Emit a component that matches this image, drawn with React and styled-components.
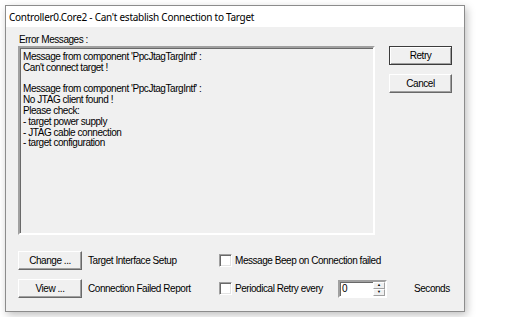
import React from 'react';
import styled, { createGlobalStyle } from 'styled-components';

const GlobalStyle = createGlobalStyle`
  html, body {
    margin: 0;
    padding: 0;
    background: #ffffff;
  }
  body {
    padding: 5px;
    font-family: 'Liberation Sans', Arial, sans-serif;
    font-size: 10px;
    letter-spacing: -0.45px;
    color: #000;
  }
`;

const Window = styled.div`
  width: 458px;
  height: 305px;
  border: 1px solid #8c8c8c;
  background: #f0f0f0;
  box-shadow: 2px 3px 8px rgba(0, 0, 0, 0.25);
  display: flex;
  flex-direction: column;
`;

const TitleBar = styled.div`
  height: 21px;
  background: #ffffff;
  display: flex;
  align-items: center;
  padding-left: 3px;
  font-family: 'Noto Sans', 'Open Sans', sans-serif;
  font-size: 10px;
  letter-spacing: -0.27px;
  color: #000;
  white-space: nowrap;
`;

const Body = styled.div`
  flex: 1;
  padding: 6px 13px 0 12px;
  display: flex;
  flex-direction: column;
`;

const TopRow = styled.div`
  display: flex;
  gap: 14px;
`;

const MessagePane = styled.div`
  display: flex;
  flex-direction: column;
`;

const Caption = styled.div`
  height: 13px;
  line-height: 13px;
  padding-left: 1px;
`;

const MessageBox = styled.div`
  width: 350px;
  height: 181px;
  border-style: solid;
  border-width: 2px;
  border-color: #a0a0a0 #ffffff #ffffff #a0a0a0;
  box-shadow: inset 1px 1px 0 #696969;
  padding: 4px 0 0 3px;
  line-height: 10.8px;
  white-space: pre;
  overflow: hidden;
`;

const ButtonColumn = styled.div`
  display: flex;
  flex-direction: column;
  gap: 9px;
  padding-top: 13px;
`;

const Button = styled.button`
  width: ${({ w }) => w || 63}px;
  height: 19px;
  padding: 0;
  background: #f0f0f0;
  font-family: inherit;
  font-size: 10px;
  letter-spacing: inherit;
  color: #000;
  border: 1px solid;
  border-color: ${({ primary }) => (primary ? '#3c3c3c' : '#ffffff #696969 #696969 #ffffff')};
  box-shadow: ${({ primary }) =>
    primary
      ? 'inset 1px 1px 0 #ffffff, inset -1px -1px 0 #a0a0a0'
      : 'inset -1px -1px 0 #a0a0a0'};
`;

const Options = styled.div`
  display: grid;
  grid-template-columns: 64px 137px 119px 49px auto;
  grid-auto-rows: 19px;
  row-gap: 9px;
  margin-top: 16px;
  align-items: center;
`;

const OptionLabel = styled.span`
  padding-left: 6px;
  white-space: nowrap;
`;

const CheckField = styled.label`
  display: flex;
  align-items: center;
  gap: 3px;
  white-space: nowrap;
  grid-column: ${({ span }) => span || 'auto'};
`;

const CheckBox = styled.span`
  width: 11px;
  height: 11px;
  background: #ffffff;
  border: 1px solid;
  border-color: #a0a0a0 #ffffff #ffffff #a0a0a0;
  box-shadow: inset 1px 1px 0 #696969, inset -1px -1px 0 #e3e3e3;
`;

const Spin = styled.div`
  width: 45px;
  height: 14px;
  display: flex;
  background: #ffffff;
  border: 2px solid;
  border-color: #a0a0a0 #ffffff #ffffff #a0a0a0;
  box-shadow: inset 1px 1px 0 #696969;
`;

const SpinValue = styled.span`
  flex: 1;
  padding: 0 0 0 2px;
  line-height: 14px;
`;

const SpinButtons = styled.div`
  width: 12px;
  display: flex;
  flex-direction: column;
`;

const SpinArrow = styled.span`
  flex: 1;
  display: flex;
  align-items: center;
  justify-content: center;
  background: #f0f0f0;
  border: 1px solid;
  border-color: #ffffff #a0a0a0 #a0a0a0 #ffffff;
  font-size: 4px;
  letter-spacing: 0;
  line-height: 1;
  color: #000;
`;

const Units = styled.span`
  padding-left: 27px;
  white-space: nowrap;
`;

const messages = `Message from component 'PpcJtagTargIntf' :
Can't connect target !

Message from component 'PpcJtagTargIntf' :
No JTAG client found !
Please check:
- target power supply
- JTAG cable connection
- target configuration`;

const App = () => (
  <>
    <GlobalStyle />
    <Window>
      <TitleBar>Controller0.Core2 - Can't establish Connection to Target</TitleBar>
      <Body>
        <TopRow>
          <MessagePane>
            <Caption>Error Messages :</Caption>
            <MessageBox>{messages}</MessageBox>
          </MessagePane>
          <ButtonColumn>
            <Button primary>Retry</Button>
            <Button>Cancel</Button>
          </ButtonColumn>
        </TopRow>
        <Options>
          <Button w={64}>Change ...</Button>
          <OptionLabel>Target Interface Setup</OptionLabel>
          <CheckField span="3 / 6">
            <CheckBox />
            Message Beep on Connection failed
          </CheckField>

          <Button w={64}>View ...</Button>
          <OptionLabel>Connection Failed Report</OptionLabel>
          <CheckField>
            <CheckBox />
            Periodical Retry every
          </CheckField>
          <Spin>
            <SpinValue>0</SpinValue>
            <SpinButtons>
              <SpinArrow>▲</SpinArrow>
              <SpinArrow>▼</SpinArrow>
            </SpinButtons>
          </Spin>
          <Units>Seconds</Units>
        </Options>
      </Body>
    </Window>
  </>
);

export default App;
